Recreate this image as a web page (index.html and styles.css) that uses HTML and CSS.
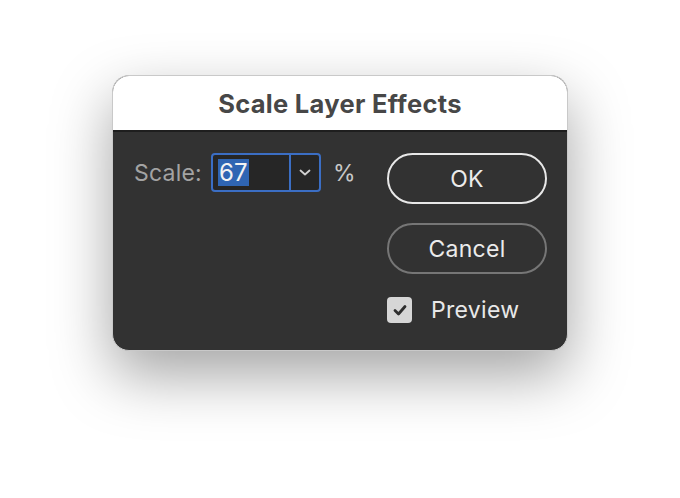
FILE: index.html
```html
<!DOCTYPE html>
<html lang="en">
<head>
    <meta charset="UTF-8">
    <title>Scale Layer Effects</title>
    <link rel="stylesheet" href="styles.css">
</head>
<body>
    <div class="dialog">
        <div class="title-bar">Scale Layer Effects</div>
        <div class="content">
            <div class="scale-row">
                <span class="label">Scale:</span>
                <div class="combo">
                    <div class="combo-field"><span class="selected">67</span></div>
                    <div class="combo-arrow">
                        <svg width="14" height="9" viewBox="0 0 14 9"><path d="M2.5 2.5 L7 6.5 L11.5 2.5" fill="none" stroke="#d0d0d0" stroke-width="1.8" stroke-linecap="round" stroke-linejoin="round"/></svg>
                    </div>
                </div>
                <span class="unit">%</span>
            </div>
            <div class="actions">
                <button class="btn btn-ok">OK</button>
                <button class="btn btn-cancel">Cancel</button>
                <label class="preview">
                    <span class="checkbox">
                        <svg width="16" height="14" viewBox="0 0 16 14"><path d="M3 7.5 L6.5 11 L13 3.5" fill="none" stroke="#2e2e2e" stroke-width="2.8" stroke-linecap="round" stroke-linejoin="round"/></svg>
                    </span>
                    <span class="preview-text">Preview</span>
                </label>
            </div>
        </div>
    </div>
</body>
</html>
```

FILE: styles.css
```css
html, body {
    margin: 0;
    height: 100%;
}
body {
    background: #ffffff;
    font-family: Inter, "Liberation Sans", Arial, sans-serif;
    padding: 75px 0 0 112px;
    box-sizing: border-box;
}
.dialog {
    width: 456px;
    height: 276px;
    border-radius: 17px;
    overflow: hidden;
    background: #323232;
    border: 1px solid #c9c9c9;
    box-sizing: border-box;
    box-shadow: 0 24px 60px rgba(0, 0, 0, 0.36);
    display: flex;
    flex-direction: column;
}
.title-bar {
    height: 56px;
    background: #ffffff;
    border-bottom: 2px solid #1e1e1e;
    color: #474747;
    font-size: 25.5px;
    font-weight: 700;
    letter-spacing: 0.3px;
    display: flex;
    align-items: center;
    justify-content: center;
    padding-top: 1px;
    box-sizing: border-box;
}
.content {
    flex: 1;
    display: flex;
    justify-content: space-between;
    padding: 21px 20px 0 21px;
}
.scale-row {
    display: flex;
    align-items: center;
    height: 39px;
}
.label {
    color: #a3a3a3;
    font-size: 23px;
    letter-spacing: 0.2px;
    width: 68px;
    margin-right: 9px;
}
.combo {
    width: 110px;
    height: 39px;
    border: 2px solid #3b6ec4;
    border-radius: 4px;
    background: #262626;
    box-sizing: border-box;
    display: flex;
}
.combo-field {
    flex: 1;
    display: flex;
    align-items: center;
    padding-left: 5px;
}
.selected {
    background: #2f65b3;
    color: #f2f2f2;
    font-size: 24px;
    line-height: 27px;
    padding: 0 2px 0 1px;
}
.combo-arrow {
    width: 28px;
    border-left: 2px solid #3b6ec4;
    display: flex;
    align-items: center;
    justify-content: center;
}
.unit {
    color: #c8c8c8;
    font-size: 23px;
    margin-left: 12px;
}
.actions {
    display: flex;
    flex-direction: column;
    width: 160px;
}
.btn {
    height: 51px;
    border-radius: 26px;
    background: transparent;
    color: #ebebeb;
    font-family: inherit;
    font-size: 23px;
    letter-spacing: 0.3px;
    padding: 0;
}
.btn-ok {
    border: 2px solid #e8e8e8;
}
.btn-cancel {
    margin-top: 19px;
    border: 2px solid #767676;
}
.preview {
    display: flex;
    align-items: center;
    margin-top: 22px;
}
.checkbox {
    width: 25px;
    height: 26px;
    border-radius: 4px;
    background: #d6d6d6;
    display: flex;
    align-items: center;
    justify-content: center;
}
.preview-text {
    color: #e8e8e8;
    font-size: 23px;
    letter-spacing: 0.3px;
    margin-left: 19px;
}
```
